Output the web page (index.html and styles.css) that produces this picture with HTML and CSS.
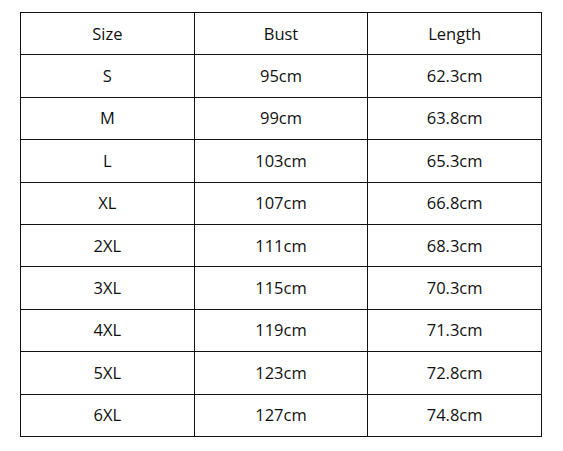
FILE: index.html
```html
<!DOCTYPE html>
<html>
<head>
<meta charset="utf-8">
<link rel="stylesheet" href="styles.css">
</head>
<body>
<table class="size-table">
  <tr><td>Size</td><td>Bust</td><td>Length</td></tr>
  <tr><td>S</td><td>95cm</td><td>62.3cm</td></tr>
  <tr><td>M</td><td>99cm</td><td>63.8cm</td></tr>
  <tr><td>L</td><td>103cm</td><td>65.3cm</td></tr>
  <tr><td>XL</td><td>107cm</td><td>66.8cm</td></tr>
  <tr><td>2XL</td><td>111cm</td><td>68.3cm</td></tr>
  <tr><td>3XL</td><td>115cm</td><td>70.3cm</td></tr>
  <tr><td>4XL</td><td>119cm</td><td>71.3cm</td></tr>
  <tr><td>5XL</td><td>123cm</td><td>72.8cm</td></tr>
  <tr><td>6XL</td><td>127cm</td><td>74.8cm</td></tr>
</table>
</body>
</html>
```
FILE: styles.css
```css
html, body {
  margin: 0;
  padding: 0;
  background: #fff;
}
body {
  padding: 12px 0 0 20px;
  font-family: "Open Sans", "Liberation Sans", sans-serif;
  color: #111;
}
.size-table {
  border-collapse: collapse;
  width: 522px;
  height: 425px;
  table-layout: fixed;
}
.size-table td {
  border: 1.5px solid #111;
  text-align: center;
  vertical-align: middle;
  font-size: 16.5px;
  line-height: 20px;
  padding: 0;
  height: 41px;
}
```
